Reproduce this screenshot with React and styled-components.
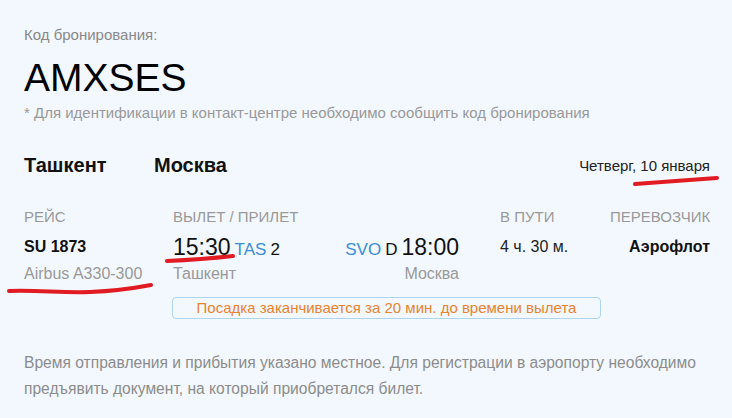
import React from "react";
import styled, { createGlobalStyle } from "styled-components";

const Global = createGlobalStyle`
  html, body { margin: 0; padding: 0; background: #f3f8fe; }
  body { font-family: "Liberation Sans", Arial, sans-serif; }
`;

const Page = styled.div`
  position: relative;
  width: 732px;
  height: 418px;
  box-sizing: border-box;
  padding: 27px 22px 0 24px;
  background: #f3f8fe;
  color: #000;
`;

const Label = styled.div`
  font-size: 15px;
  line-height: 16px;
  color: #888;
`;

const Code = styled.div`
  margin-top: 13px;
  font-size: 39px;
  line-height: 44px;
  color: #000;
`;

const Note = styled.div`
  margin-top: 4px;
  font-size: 15px;
  line-height: 18px;
  color: #999;
`;

const RouteRow = styled.div`
  margin-top: 32px;
  display: flex;
  align-items: center;
  height: 22px;
`;

const City = styled.div`
  font-size: 20px;
  font-weight: bold;
  color: #111;
  width: ${(p) => p.$w || "auto"};
`;

const DateText = styled.div`
  margin-left: auto;
  font-size: 15px;
  color: #222;
`;

const Grid = styled.div`
  margin-top: 32px;
  display: grid;
  grid-template-columns: 149px 327px 110px 100px;
  grid-auto-rows: auto;
`;

const Head = styled.div`
  font-size: 15px;
  line-height: 18px;
  color: #999;
  text-align: ${(p) => (p.$right ? "right" : "left")};
`;

const Cell = styled.div`
  text-align: ${(p) => (p.$right ? "right" : "left")};
`;

const Bold = styled.div`
  margin-top: 8px;
  font-size: 16px;
  font-weight: bold;
  line-height: 26px;
  color: #111;
`;

const Sub = styled.div`
  font-size: 16px;
  line-height: 28px;
  color: #999;
`;

const Times = styled.div`
  width: 286px;
  margin-top: 8px;
`;

const TimeLine = styled.div`
  display: flex;
  justify-content: space-between;
  align-items: baseline;
  height: 26px;
  line-height: 26px;
`;

const SubLine = styled.div`
  display: flex;
  justify-content: space-between;
`;

const Point = styled.div`
  display: flex;
  align-items: baseline;
  gap: 4px;
`;

const Time = styled.span`
  font-size: 23px;
  color: #111;
`;

const Airport = styled.span`
  font-size: 17px;
  color: ${(p) => (p.$blue ? "#3a8ed8" : "#111")};
`;

const Plain = styled.div`
  margin-top: 8px;
  font-size: 16px;
  line-height: 26px;
  color: #222;
`;

const Notice = styled.div`
  grid-column: 2 / span 2;
  width: 429px;
  margin-left: -1px;
  margin-top: 9px;
  box-sizing: border-box;
  height: 22px;
  border: 1px solid #acd5ef;
  border-radius: 4px;
  text-align: center;
  font-size: 15px;
  line-height: 20px;
  color: #e8832f;
`;

const Footer = styled.div`
  margin-top: 31px;
  font-size: 15.6px;
  line-height: 26px;
  color: #8c8c8c;
`;

const Marks = styled.svg`
  position: absolute;
  left: 0;
  top: 0;
  pointer-events: none;
`;

export default function App() {
  return (
    <>
      <Global />
      <Page>
        <Label>Код бронирования:</Label>
        <Code>AMXSES</Code>
        <Note>
          * Для идентификации в контакт-центре необходимо сообщить код
          бронирования
        </Note>
        <RouteRow>
          <City $w="130px">Ташкент</City>
          <City>Москва</City>
          <DateText>Четверг, 10 января</DateText>
        </RouteRow>
        <Grid>
          <Head>РЕЙС</Head>
          <Head>ВЫЛЕТ / ПРИЛЕТ</Head>
          <Head>В ПУТИ</Head>
          <Head $right>ПЕРЕВОЗЧИК</Head>

          <Cell>
            <Bold>SU 1873</Bold>
            <Sub>Airbus A330-300</Sub>
          </Cell>
          <Cell>
            <Times>
              <TimeLine>
                <Point>
                  <Time>15:30</Time>
                  <Airport $blue>TAS</Airport>
                  <Airport>2</Airport>
                </Point>
                <Point>
                  <Airport $blue>SVO</Airport>
                  <Airport>D</Airport>
                  <Time>18:00</Time>
                </Point>
              </TimeLine>
              <SubLine>
                <Sub>Ташкент</Sub>
                <Sub>Москва</Sub>
              </SubLine>
            </Times>
          </Cell>
          <Cell>
            <Plain>4 ч. 30 м.</Plain>
          </Cell>
          <Cell $right>
            <Bold>Аэрофлот</Bold>
          </Cell>

          <Notice>Посадка заканчивается за 20 мин. до времени вылета</Notice>
        </Grid>
        <Footer>
          Время отправления и прибытия указано местное. Для регистрации в
          аэропорту необходимо
          <br />
          предъявить документ, на который приобретался билет.
        </Footer>
        <Marks width="732" height="418" viewBox="0 0 732 418">
          <g fill="none" stroke="#e11b22" strokeLinecap="round" strokeWidth="4">
            <path d="M167 261 C 190 260, 215 258, 233 256" />
            <path d="M9 291 C 40 290, 60 293, 90 292 C 115 291, 135 288, 151 285" />
            <path d="M635 184 C 660 182, 690 180, 717 178" />
          </g>
        </Marks>
      </Page>
    </>
  );
}
